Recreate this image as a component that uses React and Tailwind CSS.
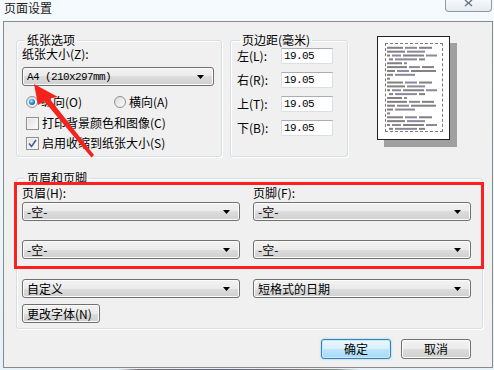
import React from 'react';

const BTN_BG = 'bg-[linear-gradient(#f2f2f2_0%,#ebebeb_50%,#dddddd_50%,#cfcfcf_100%)]';

const Arrow = () => (
  <svg width="7" height="4" viewBox="0 0 7 4" className="shrink-0">
    <path d="M0 0H7L3.5 4Z" fill="#000" />
  </svg>
);

const Select = ({ value, mono = false }) => (
  <div className={`h-[19px] w-full flex items-center justify-between pl-[4px] pr-[9px] border border-[#707070] rounded-[3px] ${BTN_BG} shadow-[inset_0_0_0_1px_#fcfcfc]`}>
    <span className={mono ? "font-['Liberation_Mono',monospace] text-[11px] tracking-[-0.6px] leading-[14px]" : 'leading-[14px]'}>{value}</span>
    <Arrow />
  </div>
);

const Radio = ({ checked }) => (
  <div className="w-[12px] h-[12px] rounded-full border border-[#8e8f8f] bg-[linear-gradient(135deg,#dcdcdc,#fbfbfb)] flex items-center justify-center shrink-0">
    {checked && (
      <div className="w-[6px] h-[6px] rounded-full bg-[radial-gradient(circle_at_40%_35%,#b8ecff_0%,#2b8fd8_45%,#0a3e78_100%)]" />
    )}
  </div>
);

const Checkbox = ({ checked }) => (
  <div className="w-[13px] h-[13px] border border-[#8e8f8f] bg-[linear-gradient(135deg,#e0e0e0,#fdfdfd)] shadow-[inset_0_0_0_1px_#f4f4f4] flex items-center justify-center shrink-0">
    {checked && (
      <svg width="9" height="9" viewBox="0 0 9 9">
        <path d="M1 4.5L3.5 7.5L8 1" fill="none" stroke="#4a5f97" strokeWidth="1.6" />
      </svg>
    )}
  </div>
);

const MarginRow = ({ label, value }) => (
  <div className="h-[16px] flex items-center">
    <span className="w-[44px] leading-[14px]">{label}</span>
    <div className="w-[52px] h-[16px] bg-white border border-[#dbdfe6] border-t-[#abadb3] flex items-center pl-[2px]">
      <span className="font-['Liberation_Mono',monospace] text-[11px] tracking-[-0.6px] leading-[14px]">{value}</span>
    </div>
  </div>
);

// word lengths of the tiny sample text, per line
const PREVIEW_TEXT = [
  [16, 12, 13], [18, 18], [3, 9, 21, 11], [4, 22, 6], [15, 3],
  [20, 11, 12], [8, 12, 25], [6, 20], [3],
];
const PREVIEW_LINES = [...PREVIEW_TEXT, ...PREVIEW_TEXT, ...PREVIEW_TEXT.slice(0, 4)];

const PagePreview = () => (
  <div className="w-[73px] h-[104px] bg-white border border-[#222] shadow-[7px_7px_0_#a0a0a0] pt-[6px] pl-[7px]">
    <div className="w-[58px] h-[89px] border border-dashed border-[#7a7a7a] pt-[2px] pl-[1px]">
      <svg width="54" height="85" viewBox="0 0 54 85">
        {PREVIEW_LINES.map((words, i) => {
          let x = i % 9 === 3 ? 2 : 0;
          return words.map((w, j) => {
            const r = <rect key={`${i}-${j}`} x={x} y={i * 3.86 + 0.8} width={w} height="2" fill={j % 2 ? '#40405a' : '#3a3030'} opacity="0.62" />;
            x += w + 2;
            return r;
          });
        })}
      </svg>
    </div>
  </div>
);

const fieldsetCls = 'border border-[#d5dfe5] rounded-[3px] shadow-[inset_1px_1px_0_#fff,1px_1px_0_#fff]';
const legendCls = 'ml-[3px] px-[2px] leading-[14px]';

export default function App() {
  return (
    <div className="relative w-[494px] h-[370px] overflow-hidden bg-[linear-gradient(180deg,#f4fafd,#e6f2f8)] font-['Noto_Sans_CJK_SC','Noto_Sans',sans-serif] text-[12px] text-black">
      {/* title bar */}
      <div className="h-[21px] flex items-start justify-between">
        <span className="pl-[4px] pt-[1px] leading-[14px] text-[#1a1a1a]">页面设置</span>
        <div className="mr-[2px] w-[47px] h-[12px] border border-t-0 border-[#8c99a6] rounded-b-[4px] bg-[linear-gradient(#f6f9fb,#e4ebf0)] flex justify-center">
          <svg width="10" height="7" viewBox="0 0 10 7">
            <path d="M1 0L8 6M8 0L1 6" stroke="#6b7680" strokeWidth="1.4" />
          </svg>
        </div>
      </div>

      {/* client area */}
      <div className="ml-[3px] w-[490px] h-[347px] border border-[#8a8a8a] bg-[#f0f0f0] pl-[12px] pt-[11px]">
        <div className="flex items-stretch">
          <fieldset className={`${fieldsetCls} w-[206px] pl-[5px] pr-[7px] pb-[3px]`}>
            <legend className={legendCls}>纸张选项</legend>
            <div className="leading-[14px]">纸张大小(Z):</div>
            <div className="mt-[6px]">
              <Select value="A4 (210x297mm)" mono />
            </div>
            <div className="mt-[6px] h-[20px] flex items-center pl-[4px]">
              <div className="w-[88px] flex items-center gap-[3px]">
                <Radio checked />
                <span className="leading-[14px]">纵向(O)</span>
              </div>
              <div className="flex items-center gap-[3px]">
                <Radio />
                <span className="leading-[14px]">横向(A)</span>
              </div>
            </div>
            <div className="mt-[1px] h-[20px] flex items-center gap-[3px] pl-[4px]">
              <Checkbox />
              <span className="leading-[14px]">打印背景颜色和图像(C)</span>
            </div>
            <div className="h-[20px] flex items-center gap-[3px] pl-[4px]">
              <Checkbox checked />
              <span className="leading-[14px]">启用收缩到纸张大小(S)</span>
            </div>
          </fieldset>

          <fieldset className={`${fieldsetCls} ml-[8px] w-[118px] pl-[6px]`}>
            <legend className={legendCls}>页边距(毫米)</legend>
            <div className="mt-[1px] flex flex-col gap-[8px]">
              <MarginRow label="左(L):" value="19.05" />
              <MarginRow label="右(R):" value="19.05" />
              <MarginRow label="上(T):" value="19.05" />
              <MarginRow label="下(B):" value="19.05" />
            </div>
          </fieldset>

          <div className="ml-[29px] mt-[3px] self-start">
            <PagePreview />
          </div>
        </div>

        <fieldset className={`${fieldsetCls} mt-[14px] w-[467px] pl-[5px] pb-[5px]`}>
          <legend className={legendCls}>页眉和页脚</legend>
          <div className="grid grid-cols-[218px_218px] gap-x-[13px]">
            <div className="mt-[1px] leading-[14px]">页眉(H):</div>
            <div className="mt-[1px] leading-[14px]">页脚(F):</div>
            <div className="mt-[2px]"><Select value="-空-" /></div>
            <div className="mt-[2px]"><Select value="-空-" /></div>
            <div className="mt-[19px]"><Select value="-空-" /></div>
            <div className="mt-[19px]"><Select value="-空-" /></div>
            <div className="mt-[20px]"><Select value="自定义" /></div>
            <div className="mt-[20px]"><Select value="短格式的日期" /></div>
            <div className="mt-[6px]">
              <button className={`w-[78px] h-[19px] border border-[#707070] rounded-[3px] ${BTN_BG} shadow-[inset_0_0_0_1px_#fcfcfc] text-left pl-[4px] leading-[14px]`}>
                更改字体(N)
              </button>
            </div>
          </div>
        </fieldset>

        <div className="mt-[10px] pr-[21px] flex justify-end gap-[10px]">
          <button className="w-[70px] h-[20px] border border-[#3c7fb1] rounded-[3px] bg-[linear-gradient(#eaf6fd_0%,#d9f0fc_50%,#bee6fd_50%,#a7d9f5_100%)] shadow-[inset_0_0_0_1px_#c4ecff,0_0_2px_#6bc3f3] leading-[14px]">
            确定
          </button>
          <button className={`w-[70px] h-[20px] border border-[#707070] rounded-[3px] ${BTN_BG} shadow-[inset_0_0_0_1px_#fcfcfc] leading-[14px]`}>
            取消
          </button>
        </div>
      </div>
      <div className="mt-[1px] h-[2px] bg-[linear-gradient(90deg,transparent_24%,#7d6e74_28%,#65607a_45%,#86706e_60%,#8a9080_68%,transparent_73%)]" />

      {/* annotations */}
      <div className="absolute left-[14px] top-[182px] w-[470px] h-[87px] border-[3px] border-[#ff1f1f] pointer-events-none" />
      <svg className="absolute left-0 top-0 pointer-events-none" width="494" height="370" viewBox="0 0 494 370">
        <polygon points="34,84 58,97 49.5,98.5 94,155 91.5,157.5 44.5,101.5 38,105" fill="#f5221b" />
      </svg>
    </div>
  );
}
